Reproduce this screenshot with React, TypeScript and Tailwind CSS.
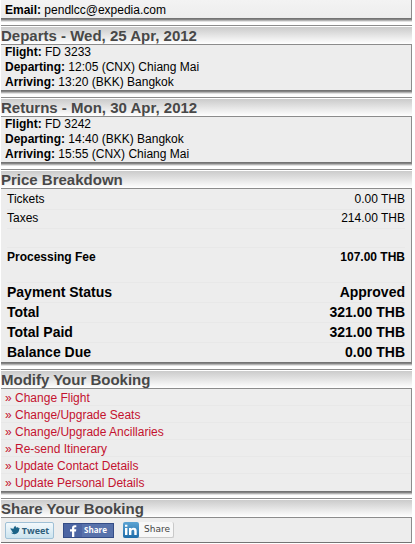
import type { ReactNode } from 'react';

const flights = [
  {
    title: 'Departs - Wed, 25 Apr, 2012',
    details: [
      { label: 'Flight:', value: 'FD 3233' },
      { label: 'Departing:', value: '12:05 (CNX) Chiang Mai' },
      { label: 'Arriving:', value: '13:20 (BKK) Bangkok' },
    ],
  },
  {
    title: 'Returns - Mon, 30 Apr, 2012',
    details: [
      { label: 'Flight:', value: 'FD 3242' },
      { label: 'Departing:', value: '14:40 (BKK) Bangkok' },
      { label: 'Arriving:', value: '15:55 (CNX) Chiang Mai' },
    ],
  },
];

const charges = [
  { label: 'Tickets', amount: '0.00 THB' },
  { label: 'Taxes', amount: '214.00 THB' },
];

const totals = [
  { label: 'Payment Status', amount: 'Approved' },
  { label: 'Total', amount: '321.00 THB' },
  { label: 'Total Paid', amount: '321.00 THB' },
  { label: 'Balance Due', amount: '0.00 THB' },
];

const actions = [
  'Change Flight',
  'Change/Upgrade Seats',
  'Change/Upgrade Ancillaries',
  'Re-send Itinerary',
  'Update Contact Details',
  'Update Personal Details',
];

function PanelBody({ children, className = '' }: { children: ReactNode; className?: string }) {
  return (
    <div
      className={`border-r border-b border-r-[#8c8c8c] border-b-[#747474] bg-[#ededed] shadow-[0_1px_0_#858585,0_2px_0_#b4b4b4,0_3px_0_#e2e2e2] ${className}`}
    >
      {children}
    </div>
  );
}

function Panel({ title, children, className = '' }: { title: string; children: ReactNode; className?: string }) {
  return (
    <section className="mt-[6px]">
      <div className="border-t border-[#8c8c8c] pt-px">
        <h2 className="h-[17px] bg-linear-to-b from-[#cbcbcb] to-white text-[15px] leading-[17px] font-bold text-[#484848]">
          {title}
        </h2>
      </div>
      <PanelBody className={`border-t border-t-[#8c8c8c] ${className}`}>{children}</PanelBody>
    </section>
  );
}

function Detail({ label, value }: { label: string; value: string }) {
  return (
    <p>
      <strong>{label}</strong> {value}
    </p>
  );
}

function ShareButtons() {
  return (
    <div className="flex h-6 items-center gap-[9px] pl-1">
      <button
        type="button"
        className="flex h-[17px] w-[49px] items-center justify-center gap-[2px] rounded-[2px] border border-[#9fc0d6] bg-linear-to-b from-[#f3f9fc] to-[#cde4ef] font-['Open_Sans',sans-serif] text-[9px] leading-none font-bold text-[#2f5f7c]"
      >
        <svg viewBox="0 0 24 24" className="h-[10px] w-[10px]" fill="#1b6387" aria-hidden="true">
          <path d="M0 6.500C2.500 8 5.500 9 8.500 8.800 9 5.500 10.500 3 13 1.500c.3 2 1 3.500 2.300 4.800C17.300 5 20 5.200 21.300 7.500L24 8l-2 2.200c0 6.800-4.800 11.800-11.300 11.800-3.500 0-6.400-1.300-8.200-3.300 2 .2 4-.2 5.500-1.500-2.200-.3-3.600-1.500-4.200-3.200h2C3 13 1.700 11.500 1.500 9.800l2 .4C1.700 9.300.5 8 0 6.500z" />
        </svg>
        Tweet
      </button>
      <button
        type="button"
        className="flex h-[15px] w-[51px] items-center border border-[#344c86] bg-[#5872ab] font-['Open_Sans',sans-serif] text-[8px] leading-none font-bold text-white"
      >
        <svg viewBox="0 0 18 13" className="h-[13px] w-[18px] shrink-0" aria-hidden="true">
          <rect width="18" height="13" fill="#4c65a3" />
          <path d="M8 13V7.500H6V5.300h2V4.200c0-2 1-3 2.800-3h1.500v2h-1c-.8 0-1 .4-1 1.100v1h2l-.3 2.200h-1.700V13z" fill="#fff" />
        </svg>
        <span className="pl-[2px]">Share</span>
      </button>
      <button
        type="button"
        className="flex h-4 w-[51px] items-center rounded-[2px] border-r border-b border-[#c9c9c9] bg-[#f7f7f7] font-['DejaVu_Sans',sans-serif] text-[9px] leading-none text-[#444]"
      >
        <svg viewBox="0 0 16 16" className="h-4 w-4 shrink-0" aria-hidden="true">
          <defs>
            <linearGradient id="linkedin" x1="0" y1="0" x2="0" y2="1">
              <stop offset="0" stopColor="#5ba3d3" />
              <stop offset="1" stopColor="#1f6ca8" />
            </linearGradient>
          </defs>
          <rect width="16" height="16" rx="2" fill="url(#linkedin)" />
          <path
            d="M2 6h2.400v7H2zM2 2.800h2.400v2H2zM6 6h2.300v1c.5-.8 1.300-1.200 2.400-1.200 2 0 3 1.200 3 3.300V13h-2.400V9.400c0-1-.4-1.600-1.300-1.600-1.100 0-1.600.7-1.600 1.800V13H6z"
            fill="#fff"
          />
        </svg>
        <span className="pl-[5px]">Share</span>
      </button>
    </div>
  );
}

export default function App() {
  return (
    <main className="mr-[3px] ml-px bg-white font-['Liberation_Sans',Arial,sans-serif] text-[12px] leading-[15px] text-black">
      <PanelBody className="bg-linear-to-b from-[#f3f3f3] to-[#ededed] px-1 pt-[3px]">
        <Detail label="Email:" value="pendlcc@expedia.com" />
      </PanelBody>

      {flights.map((flight) => (
        <Panel key={flight.title} title={flight.title} className="px-1">
          {flight.details.map((detail) => (
            <Detail key={detail.label} label={detail.label} value={detail.value} />
          ))}
        </Panel>
      ))}

      <Panel title="Price Breakdown" className="px-[6px] pt-px">
        <table className="w-full border-collapse">
          <tbody>
            {charges.map((row) => (
              <tr key={row.label} className="h-[19px] border-b border-[#e8e8e8]">
                <th scope="row" className="p-0 text-left font-normal">{row.label}</th>
                <td className="p-0 text-right">{row.amount}</td>
              </tr>
            ))}
            <tr className="h-[19px] border-b border-[#e8e8e8]">
              <td colSpan={2} className="p-0" />
            </tr>
            <tr className="h-[35px] border-b border-[#e8e8e8] align-top font-bold">
              <th scope="row" className="p-0 pt-[2px] text-left">Processing Fee</th>
              <td className="p-0 pt-[2px] text-right">107.00 THB</td>
            </tr>
            {totals.map((row) => (
              <tr key={row.label} className="h-5 border-b border-[#e8e8e8] text-[14px] font-bold last:border-b-0">
                <th scope="row" className="p-0 text-left">{row.label}</th>
                <td className="p-0 text-right">{row.amount}</td>
              </tr>
            ))}
          </tbody>
        </table>
      </Panel>

      <Panel title="Modify Your Booking">
        <ul>
          {actions.map((action) => (
            <li key={action} className="h-[17px] border-b border-[#e8e8e8] pl-1 leading-[18px] last:border-b-0">
              <a href="#" className="text-[#c4122f]">» {action}</a>
            </li>
          ))}
        </ul>
      </Panel>

      <Panel title="Share Your Booking">
        <ShareButtons />
      </Panel>
    </main>
  );
}
